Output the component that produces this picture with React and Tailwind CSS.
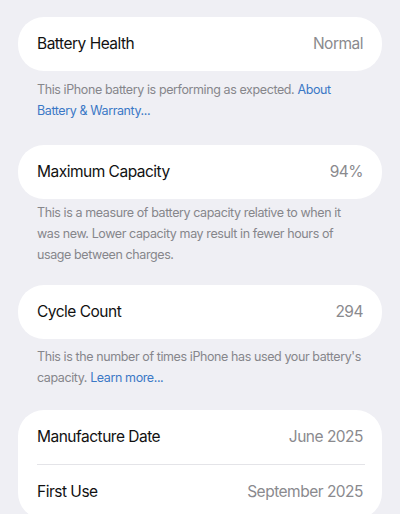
const Row = ({ label, value }) => (
  <div className="flex items-center justify-between h-[54px] px-[19px] text-[15.5px] tracking-[-0.5px]">
    <span className="text-[#111111]">{label}</span>
    <span className="text-[#8a8a8e]">{value}</span>
  </div>
);

const Card = ({ children, className = "" }) => (
  <div className={"bg-white rounded-[26px] " + className}>{children}</div>
);

const Footnote = ({ children, className = "" }) => (
  <p
    className={
      "px-[19px] text-[12.5px] tracking-[-0.4px] leading-[21px] text-[#86868b] " + className
    }
  >
    {children}
  </p>
);

const Link = ({ children }) => <span className="text-[#3b78c6]">{children}</span>;

export default function App() {
  return (
    <div
      className="min-h-screen bg-[#efeff4] px-[18px] pt-[17px] overflow-hidden"
      style={{ fontFamily: "Inter, 'Noto Sans', sans-serif" }}
    >
      <Card>
        <Row label="Battery Health" value="Normal" />
      </Card>
      <Footnote className="mt-[8px]">
        This iPhone battery is performing as expected. <Link>About Battery &amp; Warranty...</Link>
      </Footnote>

      <Card className="mt-[24px]">
        <Row label="Maximum Capacity" value="94%" />
      </Card>
      <Footnote className="mt-[3px]">
        This is a measure of battery capacity relative to when it was new. Lower capacity may
        result in fewer hours of usage between charges.
      </Footnote>

      <Card className="mt-[20px]">
        <Row label="Cycle Count" value="294" />
      </Card>
      <Footnote className="mt-[7px]">
        This is the number of times iPhone has used your battery's capacity.{" "}
        <Link>Learn more...</Link>
      </Footnote>

      <Card className="mt-[22px]">
        <Row label="Manufacture Date" value="June 2025" />
        <div className="ml-[19px] mr-[17px] h-px bg-[#e4e4e8]" />
        <Row label="First Use" value="September 2025" />
      </Card>
    </div>
  );
}
